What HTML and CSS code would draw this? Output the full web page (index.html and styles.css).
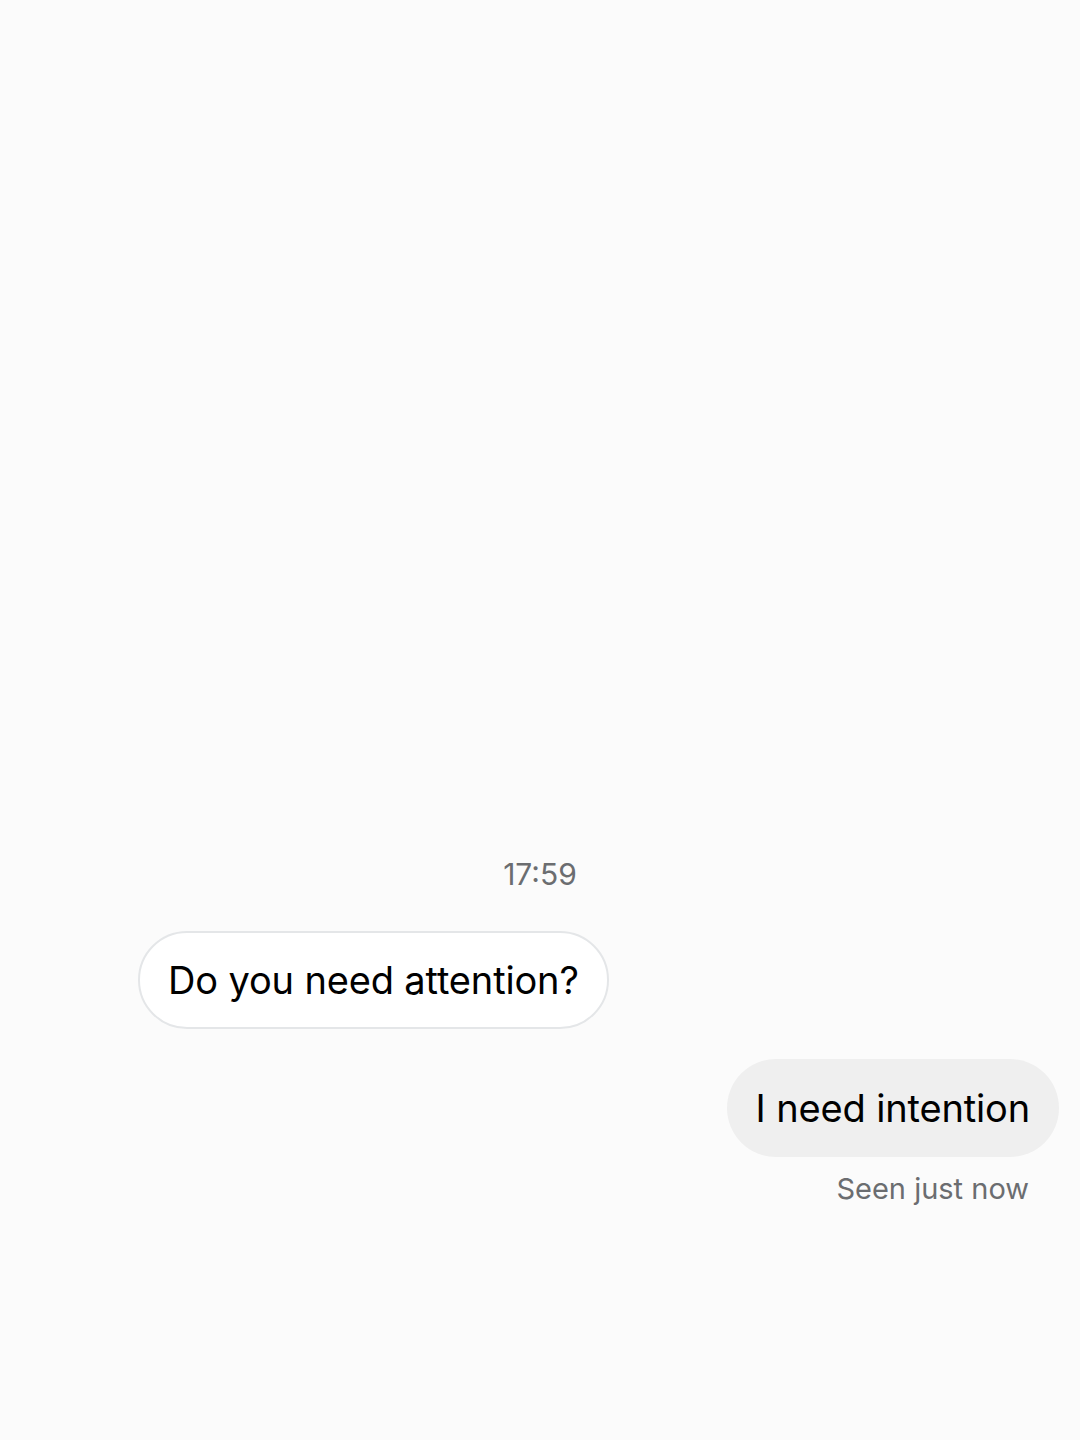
FILE: index.html
```html
<!DOCTYPE html>
<html lang="en">
<head>
  <meta charset="UTF-8" />
  <meta name="viewport" content="width=device-width, initial-scale=1" />
  <title>Chat</title>
  <link rel="stylesheet" href="styles.css">
</head>
<body>
  <main class="chat">
    <div class="hora">17:59</div>

    <div class="fila fila-recibido">
      <div class="burbuja recibido">Do you need attention?</div>
    </div>

    <div class="fila fila-enviado">
      <div class="burbuja enviado">I need intention</div>
    </div>

    <div class="visto">Seen just now</div>
  </main>
</body>
</html>
```

FILE: styles.css
```css
:root {
  --fondo: #fbfbfb;
  --texto: #000000;
  --gris: #6b6d70;
  --borde: #e4e6e8;
  --burbuja-enviada: #efefef;
}

* {
  margin: 0;
  padding: 0;
  box-sizing: border-box;
}

body {
  background: var(--fondo);
  font-family: Inter, "Noto Sans", sans-serif;
  color: var(--texto);
}

.chat {
  height: 1440px;
  display: flex;
  flex-direction: column;
  justify-content: flex-end;
  padding: 0 21px 234px 138px;
}

.hora {
  align-self: center;
  margin-left: -138px;
  margin-right: -21px;
  font-size: 30px;
  color: var(--gris);
  line-height: 34px;
  margin-bottom: 40px;
}

.fila {
  display: flex;
}

.fila-enviado {
  justify-content: flex-end;
  margin-top: 30px;
}

.burbuja {
  height: 98px;
  border-radius: 49px;
  padding: 0 29px;
  display: flex;
  align-items: center;
  font-size: 38px;
  letter-spacing: -0.15px;
}

.recibido {
  background: #ffffff;
  border: 2px solid var(--borde);
  padding: 0 28px;
}

.enviado {
  background: var(--burbuja-enviada);
}

.visto {
  align-self: flex-end;
  margin-right: 30px;
  margin-top: 15px;
  font-size: 29px;
  line-height: 34px;
  color: var(--gris);
}
```
